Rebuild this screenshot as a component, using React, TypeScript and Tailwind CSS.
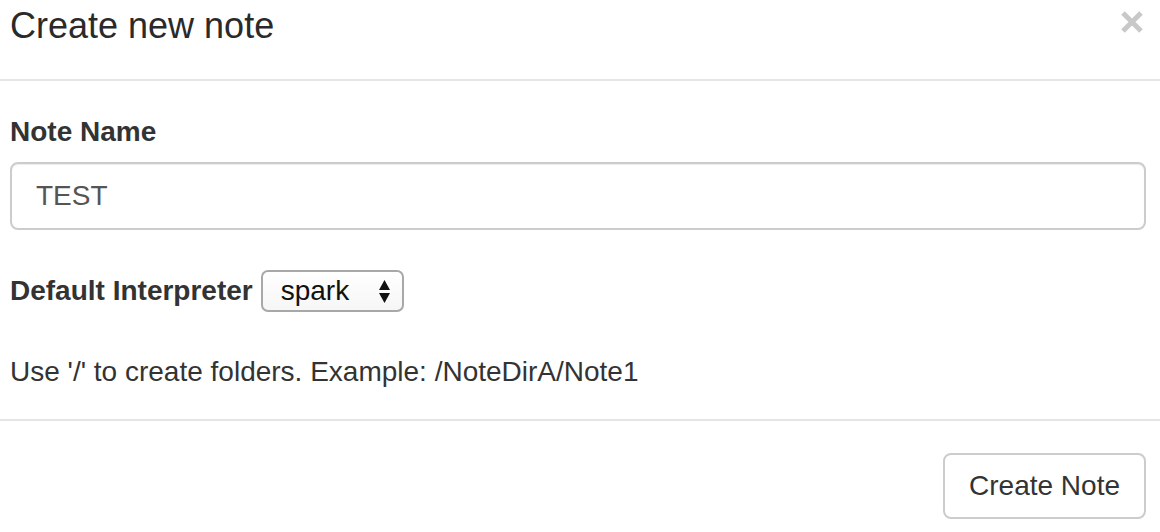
import React from 'react';

const font = { fontFamily: '"Liberation Sans", Arial, sans-serif' };

const CloseIcon: React.FC = () => (
  <svg width="24" height="22" viewBox="0 0 24 22" className="text-[#c8c8c8]">
    <path d="M3 2 L21 20 M21 2 L3 20" stroke="currentColor" strokeWidth="5" />
  </svg>
);

const SelectArrows: React.FC = () => (
  <svg width="11" height="23" viewBox="0 0 11 23" className="text-[#111] shrink-0">
    <path d="M5.5 0 L11 10 L0 10 Z" fill="currentColor" />
    <path d="M0 13 L11 13 L5.5 23 Z" fill="currentColor" />
  </svg>
);

export default function App() {
  return (
    <div className="w-[1160px] h-[532px] bg-white text-[#333] overflow-hidden" style={font}>
      {/* header */}
      <div className="flex items-start justify-between pl-[10px] pr-[15px] h-[81px] border-b-2 border-[#e5e5e5]">
        <h4 className="text-[36px] leading-[51px] font-normal text-[#2a2a2a]">Create new note</h4>
        <button className="mt-[11px] mr-[1px]">
          <CloseIcon />
        </button>
      </div>

      {/* body */}
      <div className="pl-[10px] pr-[14px] pt-[31px] pb-[27px]">
        <div className="mb-[35px]">
          <label className="block text-[28px] leading-[40px] font-bold mb-[10px]">Note Name</label>
          <input
            readOnly
            value="TEST"
            className="block w-full h-[68px] px-[24px] text-[28px] text-[#555] bg-white border-2 border-[#ccc] rounded-[8px] shadow-[inset_0_1px_1px_rgba(0,0,0,0.075)] outline-none"
            style={font}
          />
        </div>
        <div className="flex items-center h-[52px]">
          <label className="text-[28px] leading-[40px] font-bold">Default Interpreter</label>
          <div className="ml-[8px] flex items-center justify-between w-[143px] h-[42px] pl-[18px] pr-[12px] border-2 border-[#a8a8a8] rounded-[7px] bg-gradient-to-b from-white to-[#f6f6f6]">
            <span className="text-[28px] leading-[36px] text-[#111]">spark</span>
            <SelectArrows />
          </div>
        </div>
        <p className="mt-[35px] text-[28px] leading-[40px]">Use '/' to create folders. Example: /NoteDirA/Note1</p>
      </div>

      {/* footer */}
      <div className="flex justify-end pr-[14px] pt-[32px] border-t-2 border-[#e5e5e5]">
        <button className="h-[66px] px-[24px] text-[28px] text-[#333] bg-white border-2 border-[#ccc] rounded-[8px]" style={font}>
          Create Note
        </button>
      </div>
    </div>
  );
}
